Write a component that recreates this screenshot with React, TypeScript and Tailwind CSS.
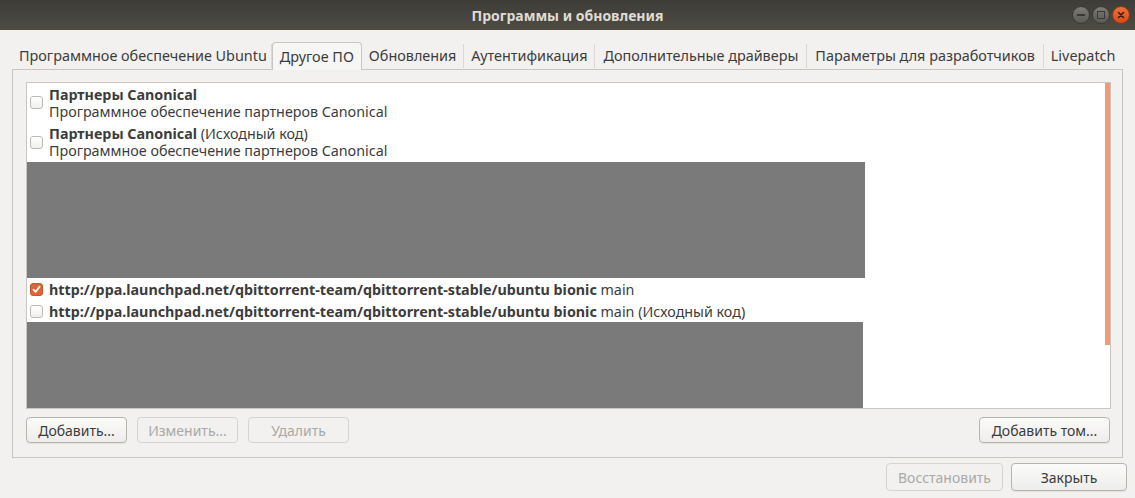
import React from "react";

const font = { fontFamily: '"Noto Sans", "Open Sans", sans-serif' };

function Checkbox({ checked = false }: { checked?: boolean }) {
  if (checked) {
    return (
      <div className="w-[13px] h-[13px] rounded-[3px] bg-[#e0643a] border border-[#c9532c] flex items-center justify-center shrink-0">
        <svg width="9" height="9" viewBox="0 0 9 9">
          <path d="M1.5 4.6 L3.6 6.8 L7.6 1.8" stroke="white" strokeWidth="1.8" fill="none" strokeLinecap="round" strokeLinejoin="round" />
        </svg>
      </div>
    );
  }
  return <div className="w-[13px] h-[13px] rounded-[3px] border border-[#bdbab5] bg-gradient-to-b from-white to-[#f0efed] shrink-0" />;
}

function Button({ children, disabled = false, className = "" }: { children: React.ReactNode; disabled?: boolean; className?: string }) {
  return (
    <div
      className={
        "h-[26px] rounded-[4px] border flex items-center justify-center text-[14px] whitespace-nowrap " +
        (disabled
          ? "border-[#d6d4d0] bg-[#f2f1f0] text-[#a9a9a7] "
          : "border-[#b7b4ae] bg-gradient-to-b from-[#fbfbfa] to-[#eeedeb] text-[#3c3c3c] shadow-[0_1px_0_rgba(0,0,0,0.06)] ") +
        className
      }
    >
      {children}
    </div>
  );
}

function Sep() {
  return <div className="w-px h-[24px] bg-[#dad8d4] self-center shrink-0" />;
}

function Tab({ label, active = false, className = "px-[7px]" }: { label: string; active?: boolean; className?: string }) {
  if (active) {
    return (
      <div className={"h-[28px] flex items-center border border-b-0 border-[#c9c6c1] rounded-t-[4px] bg-[#f6f6f5] text-[#3c3c3c] text-[14.4px] whitespace-nowrap shrink-0 -mb-px relative z-10 " + className}>
        {label}
      </div>
    );
  }
  return <div className={"h-[27px] flex items-center text-[#3c3c3c] text-[14.4px] whitespace-nowrap shrink-0 " + className}>{label}</div>;
}

export default function App() {
  return (
    <div className="w-[1135px] h-[498px] bg-[#f2f1f0] flex flex-col overflow-hidden" style={font}>
      {/* Title bar */}
      <div className="h-[30px] relative flex items-center justify-center bg-gradient-to-b from-[#3d3c38] to-[#4e4c45]">
        <span className="text-[14px] font-bold text-[#dfdbd2]">Программы и обновления</span>
        <div className="absolute right-[5px] top-[6px] flex gap-[2px]">
          <div className="w-[18px] h-[18px] rounded-full bg-gradient-to-b from-[#7c7b76] to-[#5a5954] border border-[#3a3935] flex items-center justify-center">
            <div className="w-[8px] h-[2px] bg-[#3a3935]" />
          </div>
          <div className="w-[18px] h-[18px] rounded-full bg-gradient-to-b from-[#7c7b76] to-[#5a5954] border border-[#3a3935] flex items-center justify-center">
            <div className="w-[8px] h-[8px] border-[1.5px] border-[#3a3935]" />
          </div>
          <div className="w-[18px] h-[18px] rounded-full bg-gradient-to-b from-[#f0703a] to-[#d8491b] border border-[#8f3614] flex items-center justify-center">
            <svg width="8" height="8" viewBox="0 0 8 8">
              <path d="M1.5 1.5 L6.5 6.5 M6.5 1.5 L1.5 6.5" stroke="#3a1a0c" strokeWidth="1.6" strokeLinecap="round" />
            </svg>
          </div>
        </div>
      </div>

      {/* Notebook */}
      <div className="pl-[12px] pr-[12px] pt-[12px]">
        <div className="flex items-end h-[27px]">
          <Tab label="Программное обеспечение Ubuntu" className="pl-[7px] pr-[4px]" />
          <Sep />
          <Tab label="Другое ПО" active />
          <Tab label="Обновления" />
          <Sep />
          <Tab label="Аутентификация" />
          <Sep />
          <Tab label="Дополнительные драйверы" className="px-[8px]" />
          <Sep />
          <Tab label="Параметры для разработчиков" className="px-[8px]" />
          <Sep />
          <Tab label="Livepatch" />
        </div>
        <div className="border border-[#c9c6c1] h-[389px] pl-[13px] pr-[11px] pt-[12px] flex flex-col">
          <div className="h-[327px] bg-white border border-[#c9c6c1] relative overflow-hidden">
            <div className="flex flex-col text-[14.3px] text-[#3c3c3c] leading-[17px]">
              <div className="h-[39px] flex items-center pl-[3px] gap-[6px]">
                <Checkbox />
                <div>
                  <div className="font-bold">Партнеры Canonical</div>
                  <div>Программное обеспечение партнеров Canonical</div>
                </div>
              </div>
              <div className="h-[40px] flex items-center pl-[3px] gap-[6px]">
                <Checkbox />
                <div>
                  <div>
                    <span className="font-bold">Партнеры Canonical</span> (Исходный код)
                  </div>
                  <div>Программное обеспечение партнеров Canonical</div>
                </div>
              </div>
              <div className="h-[116px] w-[838px] bg-[#7a7a7a]" />
              <div className="h-[22px] flex items-center pl-[3px] gap-[6px]">
                <Checkbox checked />
                <div className="whitespace-nowrap">
                  <span className="font-bold">http://ppa.launchpad.net/qbittorrent-team/qbittorrent-stable/ubuntu bionic</span> main
                </div>
              </div>
              <div className="h-[22px] flex items-center pl-[3px] gap-[6px]">
                <Checkbox />
                <div className="whitespace-nowrap">
                  <span className="font-bold">http://ppa.launchpad.net/qbittorrent-team/qbittorrent-stable/ubuntu bionic</span> main (Исходный код)
                </div>
              </div>
              <div className="h-[90px] w-[836px] bg-[#7a7a7a]" />
            </div>
            <div className="absolute right-0 top-0 w-[5px] h-[262px] bg-[#f59a70]" />
          </div>
          <div className="flex mt-[8px] gap-[10px]">
            <Button className="w-[101px]">Добавить...</Button>
            <Button disabled className="w-[101px]">Изменить...</Button>
            <Button disabled className="w-[101px]">Удалить</Button>
            <div className="flex-1" />
            <Button className="w-[131px] mr-[1px]">Добавить том...</Button>
          </div>
        </div>
      </div>

      {/* Bottom buttons */}
      <div className="flex justify-end gap-[8px] pr-[8px] mt-[5px]">
        <Button disabled className="w-[117px] h-[28px]">Восстановить</Button>
        <Button className="w-[116px] h-[28px]">Закрыть</Button>
      </div>
    </div>
  );
}
